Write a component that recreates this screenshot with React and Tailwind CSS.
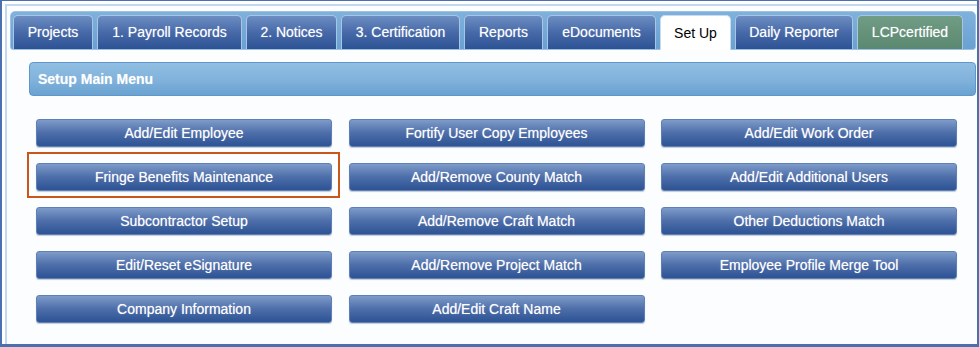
import React from "react";

const tabs = [
  { label: "Projects", w: "w-[80px]" },
  { label: "1. Payroll Records", w: "w-[145px]" },
  { label: "2. Notices", w: "w-[91px]" },
  { label: "3. Certification", w: "w-[119px]" },
  { label: "Reports", w: "w-[79px]" },
  { label: "eDocuments", w: "w-[109px]" },
  { label: "Set Up", w: "w-[71px]", active: true },
  { label: "Daily Reporter", w: "w-[118px]" },
  { label: "LCPcertified", w: "w-[106px]", green: true },
];

const buttons = [
  "Add/Edit Employee",
  "Fortify User Copy Employees",
  "Add/Edit Work Order",
  "Fringe Benefits Maintenance",
  "Add/Remove County Match",
  "Add/Edit Additional Users",
  "Subcontractor Setup",
  "Add/Remove Craft Match",
  "Other Deductions Match",
  "Edit/Reset eSignature",
  "Add/Remove Project Match",
  "Employee Profile Merge Tool",
  "Company Information",
  "Add/Edit Craft Name",
];

const Tab = ({ tab }) => {
  if (tab.active) {
    return (
      <div
        className={`${tab.w} h-[35px] -mb-px flex items-center justify-center rounded-t-[5px] border border-b-0 border-[#c9dcef] bg-white text-[14px] text-black`}
      >
        {tab.label}
      </div>
    );
  }
  return (
    <div
      className={`${tab.w} h-[34px] flex items-center justify-center rounded-t-[5px] border border-b-0 border-[#a9c5e4] text-[14px] text-white [text-shadow:0_0_1px_rgba(255,255,255,0.5)] ${
        tab.green
          ? "bg-gradient-to-b from-[#719c85] to-[#5b8870] text-[#f4f8f0]"
          : "bg-gradient-to-b from-[#6d8ec2] via-[#4769a8] to-[#2d5394]"
      }`}
    >
      {tab.label}
    </div>
  );
};

const App = () => {
  return (
    <div
      className="w-[979px] h-[347px] overflow-hidden bg-white border-t border-l-2 border-r-2 border-b-[3px] border-[#4a70ad]"
      style={{ fontFamily: '"Liberation Sans", Arial, sans-serif' }}
    >
      <div className="h-full pt-[3px] pl-[3px]">
        <div className="relative h-full border-t-2 border-l-2 border-[#c3d8ee] bg-[#fcfdfe] pt-[5px] pl-[3px] pr-[1px]">
          {/* tab strip */}
          <div className="h-[39px] flex items-end gap-1 rounded-t-[5px] rounded-b-[3px] border border-[#9cc1e3] bg-gradient-to-b from-[#7fb1dc] to-[#6aa1d2] pl-[2px]">
            {tabs.map((t) => (
              <Tab key={t.label} tab={t} />
            ))}
          </div>

          {/* header bar */}
          <div className="mt-[12px] ml-[19px] h-[34px] flex items-center rounded-[4px] border border-[#5d97cb] bg-gradient-to-b from-[#91bee2] via-[#82b3dc] to-[#6aa2d1] pl-[8px] text-[14px] font-bold text-white [text-shadow:0_0_1px_rgba(255,255,255,0.4)]">
            Setup Main Menu
          </div>

          {/* button grid */}
          <div className="mt-[23px] ml-[26px] grid grid-cols-[296px_296px_296px] gap-x-[16.5px] gap-y-4">
            {buttons.map((b) => (
              <div
                key={b}
                className="h-[28px] flex items-center justify-center rounded-[3px] border border-[#5f80b6] bg-gradient-to-b from-[#7e9bc9] via-[#4d6ea9] to-[#2d5394] text-[14px] text-white [text-shadow:0_0_1px_rgba(255,255,255,0.55)] shadow-[0_1px_1px_rgba(60,80,120,0.3)]"
              >
                {b}
              </div>
            ))}
          </div>

          {/* highlight annotation */}
          <div className="absolute left-[20px] top-[146px] w-[313px] h-[46px] border-2 border-[#c9571b]" />
        </div>
      </div>
    </div>
  );
};

export default App;
